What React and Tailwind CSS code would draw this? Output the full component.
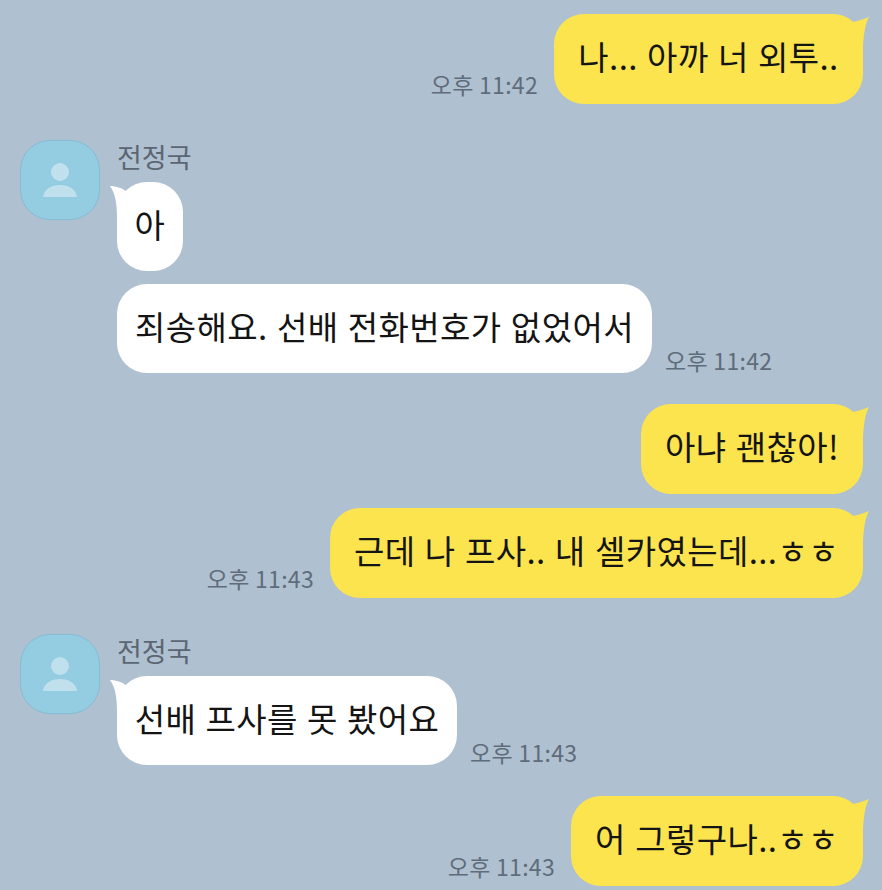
const font = { fontFamily: '"Noto Sans CJK KR", "Noto Sans", sans-serif' };

function TailRight() {
  return (
    <svg className="absolute right-[-7px] top-0" width="30" height="32" viewBox="0 0 30 32">
      <path d="M11 8 C17 8 23 5 29 3 C26 8 24 16 23 32 L11 32 Z" fill="#fce44e" />
    </svg>
  );
}

function TailLeft() {
  return (
    <svg className="absolute left-[-7px] top-0" width="20" height="36" viewBox="0 0 20 36">
      <path d="M0 4 C6 4 13 6 18 11 L18 36 L7 36 C7 20 5 11 0 4 Z" fill="#ffffff" />
    </svg>
  );
}

function Time({ children, low }) {
  return (
    <span className={`text-[23px] leading-[26px] text-[#5f6c7a] whitespace-nowrap tracking-[0.3px] ${low ? "mb-[0px]" : "mb-[7px]"}`}>
      {children}
    </span>
  );
}

function Label({ children }) {
  return <span className="relative mt-[-4px] [word-spacing:1.5px] tracking-[0.4px]">{children}</span>;
}

function Mine({ text, time, w, mt }) {
  return (
    <div className={`flex justify-end items-end gap-[16px] pr-[19px] ${mt}`}>
      {time && <Time>{time}</Time>}
      <div className={`relative h-[90px] ${w} rounded-[30px] bg-[#fce44e] flex items-center justify-center text-[33px] text-[#141414] whitespace-nowrap`}>
        <TailRight />
        <Label>{text}</Label>
      </div>
    </div>
  );
}

function Theirs({ text, time, w, mt, tail }) {
  return (
    <div className={`flex items-end gap-[13px] ${mt}`}>
      <div className={`relative h-[89px] ${w} rounded-[30px] bg-white flex items-center justify-center text-[33px] text-[#141414] whitespace-nowrap`}>
        {tail && <TailLeft />}
        <Label>{text}</Label>
      </div>
      {time && <Time low>{time}</Time>}
    </div>
  );
}

function Avatar() {
  return (
    <div className="w-[80px] h-[80px] shrink-0 rounded-[30px] bg-[#94cce1] border border-[#84bdd2] flex items-center justify-center">
      <svg width="36" height="34" viewBox="0 0 36 34">
        <circle cx="18" cy="9" r="9" fill="#bfe0ec" />
        <path d="M1 34 C2 26 9 22 18 22 C27 22 34 26 35 34 Z" fill="#bfe0ec" />
      </svg>
    </div>
  );
}

function Group({ mt, children }) {
  return (
    <div className={`flex pl-[20px] gap-[17px] ${mt}`}>
      <Avatar />
      <div className="flex flex-col">
        <div className="text-[27px] leading-[30px] mt-[2px] text-[#5b6672]">전정국</div>
        {children}
      </div>
    </div>
  );
}

export default function App() {
  return (
    <div className="w-[882px] h-[890px] overflow-hidden bg-[#afc0d0] pt-[14px]" style={font}>
      <Mine text="나... 아까 너 외투.." time="오후 11:42" w="w-[309px]" mt="" />
      <Group mt="mt-[36px]">
        <Theirs tail text="아" w="w-[66px]" mt="mt-[10px]" />
        <Theirs text="죄송해요. 선배 전화번호가 없었어서" time="오후 11:42" w="w-[535px]" mt="mt-[13px]" />
      </Group>
      <Mine text="아냐 괜찮아!" w="w-[222px]" mt="mt-[31px]" />
      <Mine text="근데 나 프사.. 내 셀카였는데...ㅎㅎ" time="오후 11:43" w="w-[533px]" mt="mt-[14px]" />
      <Group mt="mt-[36px]">
        <Theirs tail text="선배 프사를 못 봤어요" time="오후 11:43" w="w-[340px]" mt="mt-[10px]" />
      </Group>
      <Mine text="어 그렇구나..ㅎㅎ" time="오후 11:43" w="w-[292px]" mt="mt-[31px]" />
    </div>
  );
}
